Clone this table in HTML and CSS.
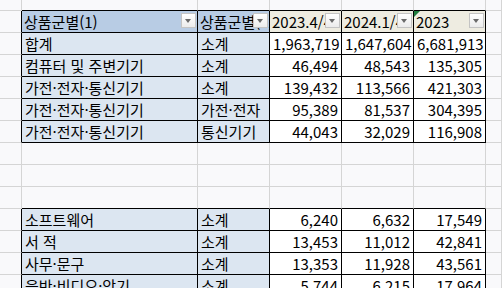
FILE: index.html
```html
<!DOCTYPE html>
<html lang="ko">
<head>
<meta charset="utf-8">
<title>상품군별</title>
<link rel="stylesheet" href="styles.css">
</head>
<body>
<div class="sheet">
  <!-- row 0 (partial) -->
  <div class="c"></div><div class="c ab"></div><div class="c ab"></div><div class="c ab"></div><div class="c ab"></div><div class="c ab"></div><div class="c"></div>
  <!-- header -->
  <div class="c lt"></div>
  <div class="c t hb hd">상품군별(1)<span class="dd"></span></div>
  <div class="c t hb hd">상품군별(2)<span class="dd"></span></div>
  <div class="c t hy hd">2023.4/4<span class="dd"></span></div>
  <div class="c t hy hd">2024.1/4<span class="dd"></span></div>
  <div class="c t hy hd"><span class="flag"></span>2023<span class="dd"></span></div>
  <div class="c"></div>
  <!-- table 1 -->
  <div class="c lt"></div><div class="c t db">합계</div><div class="c t db">소계</div><div class="c t dw num">1,963,719</div><div class="c t dw num">1,647,604</div><div class="c t dw num">6,681,913</div><div class="c"></div>
  <div class="c lt"></div><div class="c t db">컴퓨터 및 주변기기</div><div class="c t db">소계</div><div class="c t dw num">46,494</div><div class="c t dw num">48,543</div><div class="c t dw num">135,305</div><div class="c"></div>
  <div class="c lt"></div><div class="c t db">가전·전자·통신기기</div><div class="c t db">소계</div><div class="c t dw num">139,432</div><div class="c t dw num">113,566</div><div class="c t dw num">421,303</div><div class="c"></div>
  <div class="c lt"></div><div class="c t db">가전·전자·통신기기</div><div class="c t db">가전·전자</div><div class="c t dw num">95,389</div><div class="c t dw num">81,537</div><div class="c t dw num">304,395</div><div class="c"></div>
  <div class="c lt"></div><div class="c t db">가전·전자·통신기기</div><div class="c t db">통신기기</div><div class="c t dw num">44,043</div><div class="c t dw num">32,029</div><div class="c t dw num">116,908</div><div class="c"></div>
  <!-- empty rows -->
  <div class="c"></div><div class="c"></div><div class="c"></div><div class="c"></div><div class="c"></div><div class="c"></div><div class="c"></div>
  <div class="c"></div><div class="c"></div><div class="c"></div><div class="c"></div><div class="c"></div><div class="c"></div><div class="c"></div>
  <div class="c"></div><div class="c ab"></div><div class="c ab"></div><div class="c ab"></div><div class="c ab"></div><div class="c ab"></div><div class="c"></div>
  <!-- table 2 -->
  <div class="c lt"></div><div class="c t db">소프트웨어</div><div class="c t db">소계</div><div class="c t dw num">6,240</div><div class="c t dw num">6,632</div><div class="c t dw num">17,549</div><div class="c"></div>
  <div class="c lt"></div><div class="c t db">서 적</div><div class="c t db">소계</div><div class="c t dw num">13,453</div><div class="c t dw num">11,012</div><div class="c t dw num">42,841</div><div class="c"></div>
  <div class="c lt"></div><div class="c t db">사무·문구</div><div class="c t db">소계</div><div class="c t dw num">13,353</div><div class="c t dw num">11,928</div><div class="c t dw num">43,561</div><div class="c"></div>
  <div class="c lt"></div><div class="c t db">음반·비디오·악기</div><div class="c t db">소계</div><div class="c t dw num">5,744</div><div class="c t dw num">6,215</div><div class="c t dw num">17,964</div><div class="c"></div>
</div>
</body>
</html>
```
FILE: styles.css
```css
html, body {
  margin: 0;
  padding: 0;
  background: #f9f9fb;
  overflow: hidden;
  height: 288px;
}
.sheet {
  display: grid;
  grid-template-columns: 22px 176px 72px 72px 72px 72px 1fr;
  grid-template-rows: 11px;
  grid-auto-rows: 22px;
  width: 502px;
}
.c {
  box-sizing: border-box;
  border-right: 1px solid #d5d5d5;
  border-bottom: 1px solid #d5d5d5;
  font-family: "Noto Sans CJK KR", "Noto Sans", sans-serif;
  font-size: 15px;
  line-height: 21px;
  color: #000;
  padding: 0 3px;
  white-space: nowrap;
  overflow: hidden;
  position: relative;
}
.t {
  border-right-color: #000;
  border-bottom-color: #000;
}
.ab { border-bottom-color: #000; }
.lt { border-right-color: #000; }
.hb { background: #b8cce4; }
.hy { background: #eeece1; }
.db { background: #dce6f1; }
.dw { background: #ffffff; }
.num { text-align: right; padding-right: 3px; }
.hd { padding-left: 2px; }
.dd {
  position: absolute;
  right: 1px;
  top: 2px;
  width: 15px;
  height: 15px;
  box-sizing: border-box;
  border: 1px solid #c4c4c4;
  background: linear-gradient(#ffffff, #ececec);
}
.dd::after {
  content: "";
  position: absolute;
  left: 3px;
  top: 5px;
  width: 0;
  height: 0;
  border-left: 3.5px solid transparent;
  border-right: 3.5px solid transparent;
  border-top: 4px solid #6a6a6a;
}
.flag {
  position: absolute;
  left: 0;
  top: 0;
  width: 0;
  height: 0;
  border-top: 6px solid #1e7b3c;
  border-right: 6px solid transparent;
}
```
